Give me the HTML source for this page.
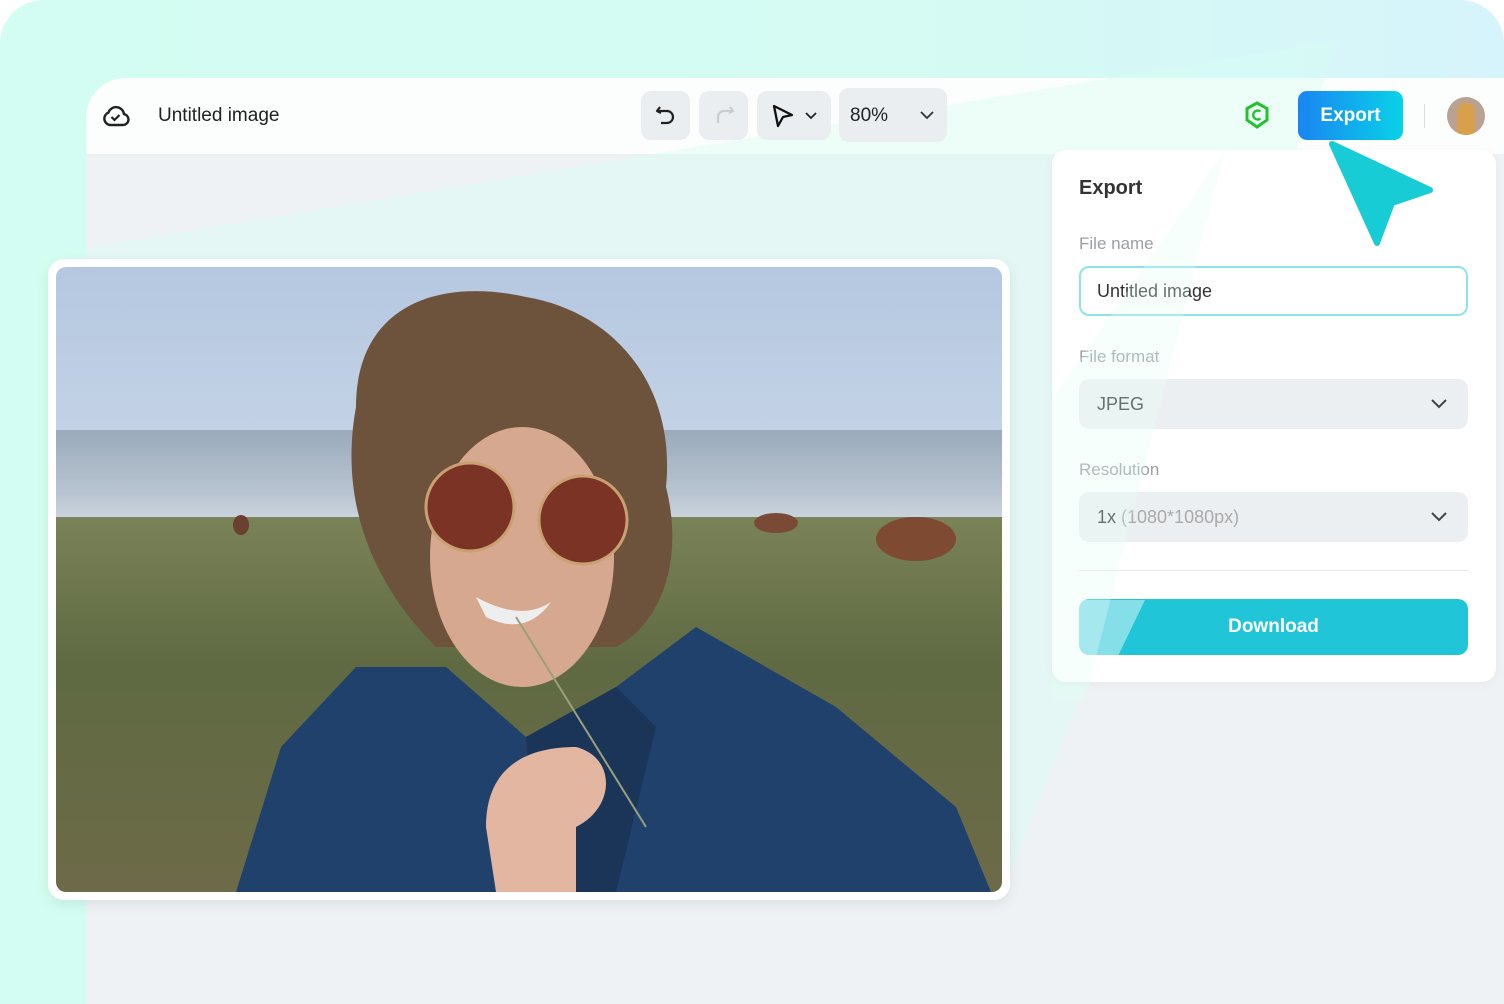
<!DOCTYPE html>
<html><head><meta charset="utf-8"><style>
*{margin:0;padding:0;box-sizing:border-box}
body{width:1504px;height:1004px;overflow:hidden;background:#fff;font-family:"Liberation Sans",sans-serif;position:relative}
.outer{position:absolute;left:0;top:0;width:1504px;height:1004px;border-radius:44px 44px 0 0;background:linear-gradient(90deg,#d3fdf2 0%,#d5fbf3 60%,#d6f4fb 100%)}
.app{position:absolute;left:86px;top:78px;width:1418px;height:926px;background:#eef2f5;border-top-left-radius:40px;overflow:hidden}
.top{position:absolute;left:0;top:0;width:1418px;height:76px;background:#fcfdfd}
.abs{position:absolute}
.btn{position:absolute;background:#eaeef1;border-radius:10px}
.panel{position:absolute;left:1052px;top:150px;width:444px;height:532px;background:#fff;border-radius:14px;box-shadow:0 2px 10px rgba(0,0,0,.04)}
.lbl{position:absolute;left:27px;font-size:17px;color:#9aa0a6}
.field{position:absolute;left:27px;width:389px;height:50px;border-radius:10px;background:#eceff2;font-size:18px;color:#333;padding:15px 18px}
</style></head><body>
<div class="outer"></div>
<div class="app">
  <div class="top">
    <svg class="abs" style="left:16px;top:25px" width="28" height="26" viewBox="0 0 28 26"><path d="M8 22 H21 a5.5 5.5 0 0 0 1-10.9 A8 8 0 0 0 6.5 9.5 a6.5 6.5 0 0 0 1.5 12.5z" fill="none" stroke="#222" stroke-width="2.4"/><path d="M9.5 14 l3 3 l5-5" fill="none" stroke="#222" stroke-width="2.2"/></svg>
    <div class="abs" style="left:72px;top:27px;font-size:19px;color:#222">Untitled image</div>
  </div>
</div>
<svg class="abs" style="left:0;top:0" width="1504" height="1004"><polygon points="40,256 1340,40 1000,900 40,900" fill="#d8fff2" opacity="0.4"/></svg>
<div class="btn" style="left:641px;top:91px;width:49px;height:49px"></div>
<svg class="abs" style="left:653px;top:103px" width="26" height="26" viewBox="0 0 26 26"><path d="M7 4 L4 8 L8 10" fill="none" stroke="#222" stroke-width="2.2" stroke-linejoin="round"/><path d="M4.5 8 H14 a6 6 0 0 1 0 12 H8" fill="none" stroke="#222" stroke-width="2.2"/></svg>
<div class="btn" style="left:699px;top:91px;width:49px;height:49px"></div>
<svg class="abs" style="left:711px;top:103px" width="26" height="26" viewBox="0 0 26 26"><path d="M19 4 L22 8 L18 10" fill="none" stroke="#c8cdd2" stroke-width="2.2"/><path d="M21.5 8 H13 a6 6 0 0 0 -6 6 V20" fill="none" stroke="#c8cdd2" stroke-width="2.2"/></svg>
<div class="btn" style="left:757px;top:91px;width:74px;height:49px"></div>
<svg class="abs" style="left:770px;top:103px" width="50" height="26" viewBox="0 0 50 26"><path d="M4 3 L22 12 L13 14 L8 23 Z" fill="none" stroke="#111" stroke-width="2.3" stroke-linejoin="round"/><path d="M36 10 l5 5 l5-5" fill="none" stroke="#222" stroke-width="1.8"/></svg>
<div class="btn" style="left:839px;top:88px;width:108px;height:54px"></div>
<div class="abs" style="left:850px;top:105px;font-size:19px;color:#222">80%</div>
<svg class="abs" style="left:918px;top:108px" width="20" height="14"><path d="M3 4 l6 6 l6-6" fill="none" stroke="#333" stroke-width="1.8"/></svg>
<svg class="abs" style="left:1244px;top:101px" width="26" height="28" viewBox="0 0 26 28"><path d="M13 2 L23 7.5 V19 L13 26 L3 19 V7.5Z" fill="none" stroke="#22c22a" stroke-width="3"/><path d="M16.5 10.5 a4.5 4.5 0 1 0 0 7" fill="none" stroke="#22c22a" stroke-width="2.4"/></svg>
<div class="abs" style="left:1298px;top:91px;width:105px;height:49px;border-radius:9px;background:linear-gradient(90deg,#1a85f2,#08d2e8);color:#fff;font-size:19px;font-weight:bold;text-align:center;line-height:49px">Export</div>
<div class="abs" style="left:1424px;top:104px;width:1px;height:24px;background:#ddd"></div>
<div class="abs" style="left:1447px;top:97px;width:38px;height:38px;border-radius:50%;background:#b9a291;overflow:hidden"><div style="position:absolute;left:10px;top:6px;width:18px;height:34px;border-radius:9px 9px 0 0;background:#d8a04a"></div></div>
<div class="panel">
  <div class="abs" style="left:27px;top:27px;font-size:20px;font-weight:bold;color:#333">Export</div>
  <div class="lbl" style="top:84px">File name</div>
  <div class="field" style="top:116px;background:#fff;border:2px solid #8ee3ea;padding:13px 16px">Untitled image</div>
  <div class="lbl" style="top:197px">File format</div>
  <div class="field" style="top:229px">JPEG</div>
  <svg class="abs" style="left:377px;top:246px" width="20" height="14"><path d="M3 4 l7 7 l7-7" fill="none" stroke="#444" stroke-width="2"/></svg>
  <div class="lbl" style="top:310px">Resolution</div>
  <div class="field" style="top:342px">1x <span style="color:#aaa">(1080*1080px)</span></div>
  <svg class="abs" style="left:377px;top:359px" width="20" height="14"><path d="M3 4 l7 7 l7-7" fill="none" stroke="#444" stroke-width="2"/></svg>
  <div class="abs" style="left:27px;top:420px;width:389px;height:1px;background:#e6e9ec"></div>
  <div class="abs" style="left:27px;top:449px;width:389px;height:56px;border-radius:10px;background:#21c5d8;color:#fff;font-size:19px;font-weight:bold;text-align:center;line-height:56px">Download</div>
</div>
<svg class="abs" style="left:0;top:0" width="1504" height="1004"><polygon points="1052,400 1225,150 1085,700 1052,700" fill="#e0fff5" opacity="0.3"/><polygon points="1079,600 1145,600 1118,656 1079,656" fill="#ffffff" opacity="0.45"/></svg>
<svg class="abs" style="left:1320px;top:135px" width="120" height="115" viewBox="0 0 120 115"><path d="M12 9 L110 55 L72 68 L57 108 Z" fill="#18ccd6" stroke="#18ccd6" stroke-width="6" stroke-linejoin="round"/></svg>
<div class="abs" style="left:48px;top:259px;width:962px;height:641px;background:#fff;border-radius:16px;box-shadow:0 4px 14px rgba(0,0,0,.08)"></div>
<svg class="abs" style="left:56px;top:267px;border-radius:10px" width="946" height="625" viewBox="0 0 946 625">
<defs><linearGradient id="sky" x1="0" y1="0" x2="0" y2="1"><stop offset="0" stop-color="#b5c8e0"/><stop offset="1" stop-color="#c3d2e6"/></linearGradient>
<linearGradient id="sea" x1="0" y1="0" x2="0" y2="1"><stop offset="0" stop-color="#9aaabb"/><stop offset=".7" stop-color="#b9c5d2"/><stop offset="1" stop-color="#cdd6df"/></linearGradient>
<linearGradient id="gr" x1="0" y1="0" x2="0" y2="1"><stop offset="0" stop-color="#7a8258"/><stop offset=".4" stop-color="#5f6a42"/><stop offset="1" stop-color="#6d6a48"/></linearGradient></defs>
<rect width="946" height="170" fill="url(#sky)"/>
<rect y="163" width="946" height="92" fill="url(#sea)"/>
<rect y="250" width="946" height="375" fill="url(#gr)"/>
<ellipse cx="860" cy="272" rx="40" ry="22" fill="#7e4a32"/>
<ellipse cx="720" cy="256" rx="22" ry="10" fill="#7a4a36"/>
<ellipse cx="185" cy="258" rx="8" ry="10" fill="#6a4030"/>
<path d="M300 140 C300 40 380 10 470 30 C560 45 620 120 610 220 C630 300 600 360 560 380 L380 380 C330 330 280 250 300 140Z" fill="#6e533c"/>
<ellipse cx="466" cy="290" rx="92" ry="130" fill="#d6a88f"/>
<path d="M380 140 C400 90 500 80 560 150 C530 120 430 110 380 170Z" fill="#6e533c"/>
<circle cx="414" cy="240" r="44" fill="#7a3325" stroke="#c9a070" stroke-width="3"/>
<circle cx="527" cy="253" r="44" fill="#7a3325" stroke="#c9a070" stroke-width="3"/>
<path d="M420 330 Q465 355 495 335 Q470 370 430 350Z" fill="#eee"/>
<path d="M180 625 L225 480 L300 400 L390 400 L470 470 L560 420 L640 360 L780 440 L900 540 L935 625Z" fill="#20416b"/>
<path d="M470 470 L560 420 L600 460 L560 625 L480 625Z" fill="#1b3559"/>
<path d="M430 560 C430 500 470 480 520 480 C560 490 560 540 520 560 L520 625 L440 625Z" fill="#e2b6a0"/>
<path d="M460 350 L590 560" stroke="#9aa07a" stroke-width="2"/>
</svg>
</body></html>
